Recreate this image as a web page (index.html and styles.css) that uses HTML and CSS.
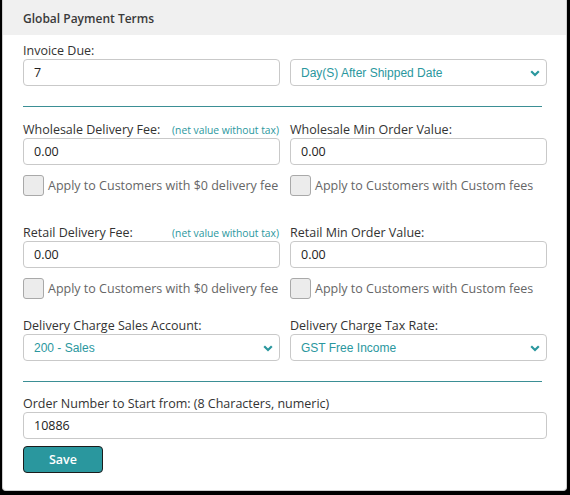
FILE: index.html
```html
<!DOCTYPE html>
<html>
<head>
<meta charset="utf-8">
<link rel="stylesheet" href="styles.css">
</head>
<body>
<div class="panel">
  <div class="panel-head">Global Payment Terms</div>
  <div class="panel-body">
    <div class="label-row first"><span class="label">Invoice Due:</span></div>
    <div class="grid">
      <div class="field">7</div>
      <div class="select"><span>Day(S) After Shipped Date</span><svg class="chev" width="10" height="7" viewBox="0 0 10 7"><path d="M1.2 1.2 L5 5 L8.8 1.2" fill="none" stroke="#2a979e" stroke-width="2.2"/></svg></div>
    </div>
    <div class="divider"></div>

    <div class="grid labels g1">
      <div class="label-row"><span class="label">Wholesale Delivery Fee:</span><span class="note">(net value without tax)</span></div>
      <div class="label-row"><span class="label">Wholesale Min Order Value:</span></div>
    </div>
    <div class="grid">
      <div class="field">0.00</div>
      <div class="field">0.00</div>
    </div>
    <div class="grid checks">
      <label class="check"><span class="box"></span>Apply to Customers with $0 delivery fee</label>
      <label class="check"><span class="box"></span>Apply to Customers with Custom fees</label>
    </div>

    <div class="grid labels g2">
      <div class="label-row"><span class="label">Retail Delivery Fee:</span><span class="note">(net value without tax)</span></div>
      <div class="label-row"><span class="label">Retail Min Order Value:</span></div>
    </div>
    <div class="grid">
      <div class="field">0.00</div>
      <div class="field">0.00</div>
    </div>
    <div class="grid checks">
      <label class="check"><span class="box"></span>Apply to Customers with $0 delivery fee</label>
      <label class="check"><span class="box"></span>Apply to Customers with Custom fees</label>
    </div>

    <div class="grid labels g3">
      <div class="label-row"><span class="label">Delivery Charge Sales Account:</span></div>
      <div class="label-row"><span class="label">Delivery Charge Tax Rate:</span></div>
    </div>
    <div class="grid">
      <div class="select"><span>200 - Sales</span><svg class="chev" width="10" height="7" viewBox="0 0 10 7"><path d="M1.2 1.2 L5 5 L8.8 1.2" fill="none" stroke="#2a979e" stroke-width="2.2"/></svg></div>
      <div class="select"><span>GST Free Income</span><svg class="chev" width="10" height="7" viewBox="0 0 10 7"><path d="M1.2 1.2 L5 5 L8.8 1.2" fill="none" stroke="#2a979e" stroke-width="2.2"/></svg></div>
    </div>
    <div class="divider d2"></div>

    <div class="label-row g4"><span class="label">Order Number to Start from: (8 Characters, numeric)</span></div>
    <div class="field wide">10886</div>
    <button class="save">Save</button>
  </div>
</div>
</body>
</html>
```
FILE: styles.css
```css
html, body {
  margin: 0;
  padding: 0;
  background: #000;
}
body {
  width: 570px;
  height: 495px;
  overflow: hidden;
}
.panel {
  margin: 0 3px 0 2px;
  height: 490px;
  background: #fff;
  border: 1px solid #cfcfcf;
  border-top: none;
  border-radius: 0 0 4px 4px;
  font-family: "Open Sans", sans-serif;
  color: #333;
}
.panel-head {
  height: 35px;
  background: #f0f0f0;
  padding-left: 20px;
  font-size: 12px;
  font-weight: 600;
  line-height: 37px;
  color: #3a3a3a;
}
.panel-body {
  padding: 0 19px 0 20px;
}
.grid {
  display: grid;
  grid-template-columns: 257px 257px;
  column-gap: 10px;
}
.label-row {
  display: flex;
  justify-content: space-between;
  align-items: baseline;
  height: 16px;
}
.label-row.first { margin-top: 8px; }
.label {
  font-size: 12.5px;
  line-height: 16px;
  color: #333;
}
.note {
  font-size: 10.3px;
  line-height: 16px;
  color: #2a979e;
  padding-right: 1px;
}
.field, .select {
  box-sizing: border-box;
  height: 27px;
  border: 1px solid #c9c9c9;
  border-radius: 4px;
  background: #fff;
  padding-left: 10px;
  display: flex;
  align-items: center;
}
.field {
  font-size: 12.5px;
  color: #222;
}
.select {
  justify-content: space-between;
  padding-right: 6px;
  font-family: "Liberation Sans", Arial, sans-serif;
  font-size: 12px;
  color: #2a979e;
}
.chev { display: block; margin-top: 1px; }
.divider {
  height: 1px;
  background: #3b8f95;
  margin: 20px 5px 0 0;
}
.labels.g1 { margin-top: 15px; }
.labels.g2 { margin-top: 29px; }
.labels.g3 { margin-top: 19px; }
.checks { margin-top: 10px; }
.check {
  display: flex;
  align-items: center;
  height: 21px;
  font-size: 12.5px;
  color: #666;
}
.box {
  box-sizing: border-box;
  width: 21px;
  height: 21px;
  border: 1px solid #a9a9a9;
  border-radius: 3px;
  background: #ececec;
  margin-right: 4px;
}
.d2 { margin-top: 20px; }
.g4 { margin-top: 14px; }
.field.wide { width: 524px; }
.save {
  display: block;
  margin-top: 7px;
  width: 80px;
  height: 27px;
  background: #2a979e;
  border: 1px solid #1c1c1c;
  border-radius: 4px;
  color: #fff;
  font-family: "Open Sans", sans-serif;
  font-size: 12.5px;
  font-weight: 600;
  padding: 0;
}
```
